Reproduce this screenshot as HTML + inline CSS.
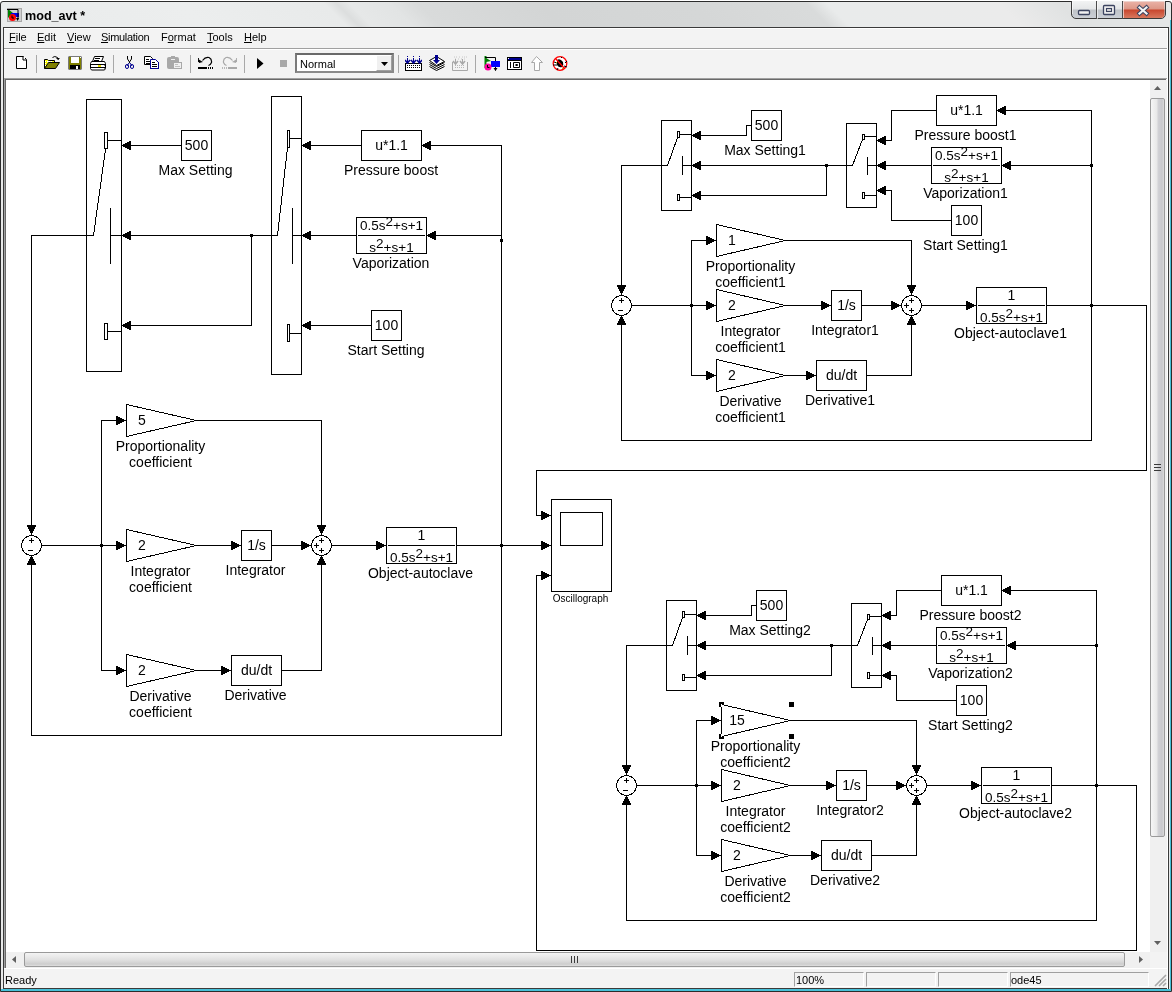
<!DOCTYPE html>
<html><head><meta charset="utf-8"><style>
*{margin:0;padding:0;box-sizing:border-box}
html,body{width:1172px;height:992px;overflow:hidden;background:#fff;font-family:"Liberation Sans",sans-serif}
.a{position:absolute;will-change:transform}
.mn{font-size:11px;color:#000;line-height:13px}
.mn u{text-decoration:underline}
.st{font-size:11px;color:#000;line-height:13px}
</style></head><body>
<div class="a" style="left:0;top:1px;width:1172px;height:991px;background:#e8e9e9;border-radius:3px 3px 0 0"></div>
<div class="a" style="left:1px;top:2px;width:1170px;height:26px;background:linear-gradient(45deg,#e9ebeb 0.0%,#eceeee 17.1%,#e8eaea 29.1%,#dcdede 30.1%,#e6e8e8 31.2%,#e2e4e4 34.6%,#d9dbdb 36.8%,#d3d5d5 47.0%,#d5d7d7 59.8%,#d9dbdb 69.4%,#e9ebeb 71.1%,#ebebeb 85.5%,#e0e2e2 90.6%,#e6e8e8 100.0%)"></div>
<div class="a" style="left:0;top:1px;width:1172px;height:991px;border:1px solid #2c2c2c;border-radius:3px 3px 0 0"></div>
<div class="a" style="left:1170px;top:20px;width:1px;height:970px;background:#48c0d8"></div>
<div class="a" style="left:1px;top:989px;width:1170px;height:2px;background:#48c0d8"></div>
<div class="a" style="left:3px;top:27px;width:1166px;height:962px;border:1px solid #3a3a3a;background:#f3f3f3"></div>
<div class="a" style="left:4px;top:28px;width:1164px;height:1px;background:#fff"></div>
<svg class="a" style="left:7px;top:8px" width="15" height="14"><rect x="0" y="0" width="15" height="14" fill="#a8a8a8"/><rect x="1" y="1" width="13" height="12" fill="#d0d0d0"/><path d="M1 1v9l5-5z" fill="#008000"/><rect x="4" y="5" width="8" height="4" fill="#0000f0"/><circle cx="5.5" cy="9.5" r="3.5" fill="#ff0000"/><path d="M5 7.5v2.5h2" fill="none" stroke="#000"/><path d="M0 1.5h11v10" fill="none" stroke="#000"/><path d="M9 10l1.5 3l1.5-3z" fill="#000"/></svg>
<div class="a" style="left:25px;top:8px;font-size:12.6px;font-weight:bold;color:#000;line-height:16px">mod_avt *</div>
<svg class="a" style="left:1071px;top:1px" width="95" height="19">
 <defs><linearGradient id="gb" x1="0" y1="0" x2="0" y2="1"><stop offset="0" stop-color="#f2f3f3"/><stop offset="0.47" stop-color="#e4e6e7"/><stop offset="0.5" stop-color="#bfc3c8"/><stop offset="1" stop-color="#ccd0d6"/></linearGradient>
 <linearGradient id="gr" x1="0" y1="0" x2="0" y2="1"><stop offset="0" stop-color="#eab2a6"/><stop offset="0.47" stop-color="#dc9686"/><stop offset="0.5" stop-color="#c8452c"/><stop offset="1" stop-color="#d8785e"/></linearGradient></defs>
 <path d="M0.5 0v13a4.5 4.5 0 0 0 4.5 4.5h85a4.5 4.5 0 0 0 4.5-4.5v-13" fill="url(#gb)" stroke="#3a3a3a"/>
 <path d="M51 0.5h42.5v12.5a4 4 0 0 1-4 4h-38.5z" fill="url(#gr)"/>
 <path d="M25.5 0v18M51.5 0v18" stroke="#4a4a4a"/>
 <path d="M1.5 1v12M26.5 1v17M52.5 1v16" stroke="#fff" stroke-opacity="0.6"/>
 <rect x="7.5" y="9.5" width="11" height="4" rx="1" fill="#f0f0f0" stroke="#3c4460" stroke-width="1.3"/>
 <rect x="32.5" y="4.5" width="11" height="9" rx="1" fill="#f0f0f0" stroke="#3c4460" stroke-width="1.3"/>
 <rect x="35.5" y="7.5" width="5" height="3" fill="#d8d8d8" stroke="#3c4460" stroke-width="1.1"/>
 <path d="M68.5 6.5l7 6M75.5 6.5l-7 6" stroke="#3c4460" stroke-width="4.2" stroke-linecap="square"/>
 <path d="M68.5 6.5l7 6M75.5 6.5l-7 6" stroke="#f4f4f4" stroke-width="2.2" stroke-linecap="square"/>
</svg>
<div class="a mn" style="left:9px;top:31px"><u>F</u>ile</div><div class="a mn" style="left:37px;top:31px"><u>E</u>dit</div><div class="a mn" style="left:67px;top:31px"><u>V</u>iew</div><div class="a mn" style="left:101px;top:31px"><span style="letter-spacing:-0.3px"><u>S</u>imulation</span></div><div class="a mn" style="left:161px;top:31px">F<u>o</u>rmat</div><div class="a mn" style="left:207px;top:31px"><u>T</u>ools</div><div class="a mn" style="left:244px;top:31px"><u>H</u>elp</div>
<div class="a" style="left:4px;top:48px;width:1164px;height:1px;background:#a0a0a0"></div>
<div class="a" style="left:4px;top:49px;width:1164px;height:1px;background:#fff"></div>
<div class="a" style="left:36px;top:55px;width:1px;height:18px;background:#a8a8a8"></div><div class="a" style="left:113px;top:55px;width:1px;height:18px;background:#a8a8a8"></div><div class="a" style="left:190px;top:55px;width:1px;height:18px;background:#a8a8a8"></div><div class="a" style="left:244px;top:55px;width:1px;height:18px;background:#a8a8a8"></div><div class="a" style="left:398px;top:55px;width:1px;height:18px;background:#a8a8a8"></div><div class="a" style="left:475px;top:55px;width:1px;height:18px;background:#a8a8a8"></div>
<svg class="a" style="left:15px;top:55px" width="14" height="15" viewBox="0 0 14 15" ><path d="M1.5 1.5h7l3 3v9h-10z" fill="#fff" stroke="#000"/><path d="M8 2v3h3" fill="none" stroke="#000"/><rect x="9" y="2" width="1" height="2" fill="#fff"/></svg><svg class="a" style="left:44px;top:55px" width="17" height="15" viewBox="0 0 17 15" ><path d="M0.5 4.5h3l1 1h6v2" fill="#ffff00" stroke="#000"/><path d="M0.5 4.5v9" stroke="#000"/><path d="M1 5h3v8h-3z" fill="#ffff00"/><path d="M1 6l1 1M3 6l1 1M1 8l1 1M3 8l1 1M1 10l1 1M5 6l1 1M7 6l1 1" stroke="#fff"/><path d="M0.5 13.5l4-6h11l-4 6z" fill="#808000" stroke="#000"/><path d="M8.5 2.5q2-2 5 0l1 2" fill="none" stroke="#000"/><path d="M12 3h4l-2 2z" fill="#000"/></svg><svg class="a" style="left:68px;top:56px" width="15" height="14" viewBox="0 0 15 14" ><rect x="0.5" y="0.5" width="13" height="13" fill="#000"/><rect x="1" y="1" width="12" height="12" fill="#808000"/><rect x="3" y="1" width="8" height="6" fill="#fff"/><rect x="2" y="9" width="10" height="4" fill="#000"/><rect x="8" y="10" width="2" height="3" fill="#fff"/><rect x="12" y="1" width="1" height="1" fill="#fff"/></svg><svg class="a" style="left:89px;top:55px" width="18" height="16" viewBox="0 0 18 16" ><path d="M5.5 1.5h9l-2 5h-9z" fill="#fff" stroke="#000"/><path d="M6 3.5h5M5 5.5h5" stroke="#000"/><path d="M2.5 6.5h13l1 2v5l-1 1.5h-13l-1-1.5v-5z" fill="#fff" stroke="#000"/><path d="M2 9.5h14M2 12.5h14" stroke="#000"/><rect x="9" y="10" width="3" height="2" fill="#e8e000"/><path d="M15 7l1 1M15 10l1 1M15 13l1 1" stroke="#808080"/></svg><svg class="a" style="left:124px;top:55px" width="12" height="15" viewBox="0 0 12 15" ><path d="M3.5 1v3l2 3M7.5 1v3l-2 3" fill="none" stroke="#000"/><path d="M5.5 7v1" stroke="#000"/><path d="M5 8l-2 3M6 8l2 3" stroke="#000090"/><rect x="1.5" y="9.5" width="3" height="4" rx="1.5" fill="none" stroke="#000090"/><rect x="6.5" y="9.5" width="3" height="4" rx="1.5" fill="none" stroke="#000090"/></svg><svg class="a" style="left:143px;top:55px" width="17" height="15" viewBox="0 0 17 15" ><path d="M1.5 1.5h6l2 2v6h-8z" fill="#fff" stroke="#000"/><path d="M3 4.5h3M3 6.5h4M3 8.5h4" stroke="#000"/><path d="M7.5 4.5h5l3 3v6h-8z" fill="#fff" stroke="#000090" stroke-width="1"/><path d="M7 13.5h9M15.5 7v7" stroke="#000090"/><path d="M9 7.5h3M9 9.5h5M9 11.5h5" stroke="#000"/></svg><svg class="a" style="left:167px;top:55px" width="15" height="15" viewBox="0 0 15 15" ><rect x="0" y="2" width="12" height="12" rx="2" fill="#a8a8a8"/><rect x="4" y="1" width="4" height="2" fill="#a8a8a8"/><path d="M4 4.5h4" stroke="#f0f0f0"/><rect x="6.5" y="7.5" width="8" height="6" fill="#f0f0f0" stroke="#a8a8a8"/><path d="M8 9.5h3M8 11.5h5" stroke="#c0c0c0"/></svg><svg class="a" style="left:198px;top:56px" width="16" height="14" viewBox="0 0 16 14" ><path d="M4.5 4.5q3-4 6.5-3q3 1.5 2.5 5q-1 2.5-3 3" fill="none" stroke="#000" stroke-width="1.2"/><path d="M0 2h1v4h4l-4 1z" fill="#000"/><path d="M0 3l5 3h-5z" fill="#000"/><rect x="0" y="11" width="9" height="2" fill="#000"/><rect x="10" y="11" width="1" height="2" fill="#000"/><rect x="12" y="11" width="1" height="2" fill="#000"/><rect x="14" y="11" width="1" height="2" fill="#000"/></svg><svg class="a" style="left:221px;top:56px" width="16" height="14" viewBox="0 0 16 14" ><path d="M11.5 4.5q-3-4-6.5-3q-3 1.5-2.5 5q1 2.5 3 3" fill="none" stroke="#a8a8a8" stroke-width="1.2"/><path d="M16 2h-1v4h-4l4 1z" fill="#a8a8a8"/><path d="M16 3l-5 3h5z" fill="#a8a8a8"/><rect x="7" y="11" width="9" height="2" fill="#a8a8a8"/><rect x="1" y="11" width="1" height="2" fill="#b8b8b8"/><rect x="3" y="11" width="1" height="2" fill="#b8b8b8"/><rect x="5" y="11" width="1" height="2" fill="#b8b8b8"/></svg><svg class="a" style="left:257px;top:58px" width="7" height="11" viewBox="0 0 7 11" ><path d="M0 0l6.5 5.5l-6.5 5.5z" fill="#000"/></svg><svg class="a" style="left:280px;top:60px" width="7" height="7" viewBox="0 0 7 7" ><rect width="7" height="7" fill="#a8a8a8"/></svg><svg class="a" style="left:405px;top:56px" width="17" height="15" viewBox="0 0 17 15" ><rect x="0.5" y="7.5" width="16" height="7" fill="#fff" stroke="#000"/><rect x="0" y="14" width="17" height="1" fill="#000"/><path d="M2 9.5h1M4 9.5h1M6 9.5h1M8 9.5h1M10 9.5h1M12 9.5h1M14 9.5h1M2 11.5h1M4 11.5h1M6 11.5h1M8 11.5h1M10 11.5h1M12 11.5h1M14 11.5h1" stroke="#000"/><path d="M2.5 0v1M8.5 0v1M14.5 0v1M2.5 2v5M8.5 2v5M14.5 2v5" stroke="#000090"/><path d="M0 4l2.5 3l2.5-3M6 4l2.5 3l2.5-3M12 4l2.5 3l2.5-3" fill="none" stroke="#000090" stroke-width="1.5"/></svg><svg class="a" style="left:429px;top:55px" width="16" height="16" viewBox="0 0 16 16" ><path d="M0.5 5.5l7-4l8 5l-8 4z" fill="#fff" stroke="#000"/><path d="M0.5 7.5l7 4l8-4M0.5 9.5l7 4l8-4M0.5 11.5l7 4l8-4" fill="none" stroke="#000"/><path d="M6 0h3v5h2l-3.5 4l-3.5-4h2z" fill="#000090"/></svg><svg class="a" style="left:452px;top:56px" width="16" height="15" viewBox="0 0 16 15" ><path d="M0.5 6v8.5h15v-8.5" fill="none" stroke="#a8a8a8"/><path d="M3 9.5h1M5 9.5h1M7 9.5h1M9 9.5h1M11 9.5h1M3 11.5h1M5 11.5h1M7 11.5h1M9 11.5h1M11 11.5h1" stroke="#b8b8b8"/><path d="M2 1h1M4 1h1M7 1h1M10 1h1M12 1h1M14 1h1M3 3h1M6 3h1M9 3h1M12 3h1" stroke="#c8c8c8"/><path d="M3.5 3v4M10.5 3v4" stroke="#a8a8a8"/><path d="M1 5l2.5 3l2.5-3M8 5l2.5 3l2.5-3" fill="none" stroke="#a8a8a8" stroke-width="1.5"/></svg><svg class="a" style="left:484px;top:55px" width="16" height="17" viewBox="0 0 16 17" ><path d="M1.5 1v12" stroke="#008000" stroke-width="2"/><path d="M2 3l5 3l-5 1z" fill="#008000"/><path d="M1 2.5h10.5v13" fill="none" stroke="#000"/><rect x="7" y="6" width="9" height="6" fill="#0000ff"/><circle cx="4" cy="12" r="3.5" fill="#ff00a0"/><path d="M3.5 10v2.5h2" stroke="#000" fill="none"/><path d="M9.5 13l2 3l2-3z" fill="#000"/></svg><svg class="a" style="left:507px;top:57px" width="15" height="13" viewBox="0 0 15 13" ><rect x="0" y="0" width="15" height="13" fill="#000"/><rect x="1" y="1" width="13" height="2" fill="#000090"/><rect x="1" y="1" width="1" height="1" fill="#fff"/><rect x="1" y="4" width="13" height="8" fill="#fff"/><rect x="3" y="5" width="1" height="6" fill="#000"/><path d="M6.5 5.5h6v5h-6zM8.5 7.5h2v1h-2" fill="none" stroke="#000"/></svg><svg class="a" style="left:530px;top:56px" width="14" height="15" viewBox="0 0 14 15" ><path d="M6.5 0.5l6 6h-3v8h-5v-8h-3z" fill="#fff" stroke="#a8a8a8"/></svg><svg class="a" style="left:552px;top:56px" width="16" height="15" viewBox="0 0 16 15" ><circle cx="8" cy="7.5" r="6.8" fill="#fff" stroke="#ff0000" stroke-width="1.3"/><path d="M5 4q3-2 6 2q1 3-1 5q-3 1-5-2z" fill="#000"/><path d="M2 6l3 1M1 9l4 0M13 7l2-2M12 10l3 1M6 12l-1 2M9 2l1-1" stroke="#000"/><path d="M3.5 2.5l9 10" stroke="#ff0000" stroke-width="1.3"/><rect x="4" y="6" width="1" height="1" fill="#c0c000"/><rect x="10" y="12" width="1" height="1" fill="#c0c000"/></svg>
<div class="a" style="left:295px;top:53px;width:99px;height:20px;border:2px solid;border-color:#6a6a6a #8a8a8a #8a8a8a #7a7a7a;background:#fff"></div>
<div class="a" style="left:376px;top:55px;width:16px;height:16px;background:#f0f0f0;border:1px solid;border-color:#fff #a0a0a0 #a0a0a0 #fff"></div>
<svg class="a" style="left:381px;top:62px" width="7" height="4"><path d="M0 0h7l-3.5 4z" fill="#000"/></svg>
<div class="a" style="left:300px;top:58px;font-size:11px;line-height:13px">Normal</div>
<div class="a" style="left:4px;top:78px;width:1163px;height:1px;background:#a0a0a0"></div>
<div class="a" style="left:5px;top:79px;width:1161px;height:1px;background:#696969"></div>
<div class="a" style="left:4px;top:78px;width:1px;height:890px;background:#a0a0a0"></div><div class="a" style="left:5px;top:79px;width:1px;height:889px;background:#696969"></div><div class="a" style="left:1167px;top:28px;width:1px;height:961px;background:#fff"></div>
<div class="a" style="left:6px;top:80px;width:1144px;height:872px;background:#fff"></div>
<div class="a" style="left:1150px;top:80px;width:17px;height:872px;background:#f0f0f0"></div>
<div class="a" style="left:1150px;top:98px;width:15px;height:739px;border:1px solid #9a9a9a;border-radius:2px;background:linear-gradient(90deg,#f6f6f6,#e8e8e8 45%,#d2d2d6 55%,#c8c8cc 85%,#dcdcdc)"></div>
<svg class="a" style="left:1154px;top:86px" width="7" height="4"><path d="M0 4h7l-3.5-4z" fill="#606060"/></svg>
<svg class="a" style="left:1154px;top:941px" width="7" height="4"><path d="M0 0h7l-3.5 4z" fill="#606060"/></svg>
<div class="a" style="left:6px;top:952px;width:1144px;height:16px;background:#f0f0f0"></div>
<div class="a" style="left:24px;top:952px;width:1101px;height:15px;border:1px solid #9a9a9a;border-radius:2px;background:linear-gradient(#f4f4f4,#e2e2e2 50%,#cdcdcd 85%,#dedede)"></div>
<div class="a" style="left:571px;top:956px;width:7px;height:7px;background:repeating-linear-gradient(90deg,#3a3a3a 0 1px,transparent 1px 3px)"></div><div class="a" style="left:1154px;top:464px;width:7px;height:7px;background:repeating-linear-gradient(180deg,#3a3a3a 0 1px,transparent 1px 3px)"></div>
<svg class="a" style="left:12px;top:956px" width="4" height="7"><path d="M4 0v7l-4-3.5z" fill="#606060"/></svg>
<svg class="a" style="left:1139px;top:956px" width="4" height="7"><path d="M0 0v7l4-3.5z" fill="#606060"/></svg>
<div class="a" style="left:4px;top:968px;width:1164px;height:1px;background:#fff"></div>
<div class="a st" style="left:5px;top:974px">Ready</div>
<div class="a" style="left:794px;top:972px;width:70px;height:15px;border:1px solid;border-color:#a0a0a0 #fff #fff #a0a0a0"></div>
<div class="a" style="left:866px;top:972px;width:70px;height:15px;border:1px solid;border-color:#a0a0a0 #fff #fff #a0a0a0"></div>
<div class="a" style="left:938px;top:972px;width:70px;height:15px;border:1px solid;border-color:#a0a0a0 #fff #fff #a0a0a0"></div>
<div class="a" style="left:1010px;top:972px;width:139px;height:15px;border:1px solid;border-color:#a0a0a0 #fff #fff #a0a0a0"></div>
<div class="a st" style="left:796px;top:974px">100%</div>
<div class="a st" style="left:1011px;top:974px">ode45</div>
<svg class="a" style="left:1154px;top:974px" width="13" height="13"><path d="M12 1L1 12M12 5L5 12M12 9L9 12" stroke="#a8a8a8" stroke-width="1.6"/></svg>
<svg width="1172" height="992" style="position:absolute;left:0;top:0"><defs><clipPath id="cv"><rect x="6" y="80" width="1144" height="872"/></clipPath></defs><g clip-path="url(#cv)" font-family="Liberation Sans, sans-serif" fill="#000"><path d="M86 99h36v1h-36zM86 371h36v1h-36zM86 99h1v273h-1zM121 99h1v273h-1zM104 132h4v1h-4zM104 148h4v1h-4zM104 132h1v17h-1zM107 132h1v17h-1zM108 140h14v1h-14zM104 323h4v1h-4zM104 339h4v1h-4zM104 323h1v17h-1zM107 323h1v17h-1zM108 331h14v1h-14zM110 208h1v56h-1zM111 235h11v1h-11zM271 96h31v1h-31zM271 374h31v1h-31zM271 96h1v279h-1zM301 96h1v279h-1zM287 130h3v1h-3zM287 147h3v1h-3zM287 130h1v18h-1zM289 130h1v18h-1zM290 138h12v1h-12zM287 324h3v1h-3zM287 341h3v1h-3zM287 324h1v18h-1zM289 324h1v18h-1zM290 333h12v1h-12zM292 208h1v56h-1zM293 235h9v1h-9zM181 130h31v1h-31zM181 160h31v1h-31zM181 130h1v31h-1zM211 130h1v31h-1zM122 145h59v1h-59zM123 144h2v3h-2zM125 143h2v5h-2zM127 142h2v7h-2zM129 141h2v9h-2zM361 130h61v1h-61zM361 160h61v1h-61zM361 130h1v31h-1zM421 130h1v31h-1zM302 145h59v1h-59zM303 144h2v3h-2zM305 143h2v5h-2zM307 142h2v7h-2zM309 141h2v9h-2zM501 145h1v591h-1zM422 145h80v1h-80zM423 144h2v3h-2zM425 143h2v5h-2zM427 142h2v7h-2zM429 141h2v9h-2zM356 217h71v1h-71zM356 253h71v1h-71zM356 217h1v37h-1zM426 217h1v37h-1zM358 235h67v1h-67zM427 235h75v1h-75zM428 234h2v3h-2zM430 233h2v5h-2zM432 232h2v7h-2zM434 231h2v9h-2zM500 239h3v3h-3zM302 235h54v1h-54zM303 234h2v3h-2zM305 233h2v5h-2zM307 232h2v7h-2zM309 231h2v9h-2zM371 310h31v1h-31zM371 340h31v1h-31zM371 310h1v31h-1zM401 310h1v31h-1zM302 325h69v1h-69zM303 324h2v3h-2zM305 323h2v5h-2zM307 322h2v7h-2zM309 321h2v9h-2zM122 235h156v1h-156zM250 234h3v3h-3zM123 234h2v3h-2zM125 233h2v5h-2zM127 232h2v7h-2zM129 231h2v9h-2zM251 235h1v91h-1zM122 325h130v1h-130zM123 324h2v3h-2zM125 323h2v5h-2zM127 322h2v7h-2zM129 321h2v9h-2zM31 235h63v1h-63zM31 235h1v300h-1zM27 525h9v2h-9zM28 527h7v2h-7zM29 529h5v2h-5zM30 531h3v2h-3zM29 540h5v1h-5zM31 538h1v5h-1zM28 550h5v1h-5zM42 545h84v1h-84zM116 541h2v9h-2zM118 542h2v7h-2zM120 543h2v5h-2zM122 544h2v3h-2zM100 544h3v3h-3zM101 420h1v251h-1zM101 420h25v1h-25zM116 416h2v9h-2zM118 417h2v7h-2zM120 418h2v5h-2zM122 419h2v3h-2zM101 670h25v1h-25zM116 666h2v9h-2zM118 667h2v7h-2zM120 668h2v5h-2zM122 669h2v3h-2zM126 404h1v33h-1zM126 529h1v33h-1zM126 654h1v33h-1zM195 420h127v1h-127zM321 420h1v115h-1zM317 525h9v2h-9zM318 527h7v2h-7zM319 529h5v2h-5zM320 531h3v2h-3zM195 545h46v1h-46zM231 541h2v9h-2zM233 542h2v7h-2zM235 543h2v5h-2zM237 544h2v3h-2zM241 530h31v1h-31zM241 560h31v1h-31zM241 530h1v31h-1zM271 530h1v31h-1zM272 545h39v1h-39zM301 541h2v9h-2zM303 542h2v7h-2zM305 543h2v5h-2zM307 544h2v3h-2zM195 670h36v1h-36zM221 666h2v9h-2zM223 667h2v7h-2zM225 668h2v5h-2zM227 669h2v3h-2zM231 655h51v1h-51zM231 685h51v1h-51zM231 655h1v31h-1zM281 655h1v31h-1zM282 670h40v1h-40zM321 556h1v115h-1zM320 557h3v2h-3zM319 559h5v2h-5zM318 561h7v2h-7zM317 563h9v2h-9zM319 540h5v1h-5zM321 538h1v5h-1zM314 545h5v1h-5zM316 543h1v5h-1zM319 550h5v1h-5zM321 548h1v5h-1zM332 545h54v1h-54zM376 541h2v9h-2zM378 542h2v7h-2zM380 543h2v5h-2zM382 544h2v3h-2zM386 527h71v1h-71zM386 563h71v1h-71zM386 527h1v37h-1zM456 527h1v37h-1zM388 545h67v1h-67zM457 545h94v1h-94zM500 544h3v3h-3zM541 541h2v9h-2zM543 542h2v7h-2zM545 543h2v5h-2zM547 544h2v3h-2zM31 735h471v1h-471zM31 556h1v180h-1zM30 557h3v2h-3zM29 559h5v2h-5zM28 561h7v2h-7zM27 563h9v2h-9zM551 499h61v1h-61zM551 591h61v1h-61zM551 499h1v93h-1zM611 499h1v93h-1zM560 512h43v1h-43zM560 545h43v1h-43zM560 512h1v34h-1zM602 512h1v34h-1zM661 120h31v1h-31zM661 210h31v1h-31zM661 120h1v91h-1zM691 120h1v91h-1zM677 131h3v1h-3zM677 137h3v1h-3zM677 131h1v7h-1zM679 131h1v7h-1zM680 134h12v1h-12zM677 194h3v1h-3zM677 200h3v1h-3zM677 194h1v7h-1zM679 194h1v7h-1zM680 197h12v1h-12zM682 156h1v19h-1zM683 165h9v1h-9zM846 123h31v1h-31zM846 207h31v1h-31zM846 123h1v85h-1zM876 123h1v85h-1zM862 134h3v1h-3zM862 139h3v1h-3zM862 134h1v6h-1zM864 134h1v6h-1zM865 136h12v1h-12zM862 192h3v1h-3zM862 198h3v1h-3zM862 192h1v7h-1zM864 192h1v7h-1zM865 195h12v1h-12zM867 157h1v18h-1zM868 165h9v1h-9zM751 110h31v1h-31zM751 140h31v1h-31zM751 110h1v31h-1zM781 110h1v31h-1zM746 125h5v1h-5zM746 125h1v11h-1zM692 135h55v1h-55zM693 134h2v3h-2zM695 133h2v5h-2zM697 132h2v7h-2zM699 131h2v9h-2zM692 165h161v1h-161zM825 164h3v3h-3zM693 164h2v3h-2zM695 163h2v5h-2zM697 162h2v7h-2zM699 161h2v9h-2zM826 165h1v31h-1zM692 195h135v1h-135zM693 194h2v3h-2zM695 193h2v5h-2zM697 192h2v7h-2zM699 191h2v9h-2zM621 165h47v1h-47zM621 165h1v130h-1zM617 285h9v2h-9zM618 287h7v2h-7zM619 289h5v2h-5zM620 291h3v2h-3zM936 95h61v1h-61zM936 125h61v1h-61zM936 95h1v31h-1zM996 95h1v31h-1zM891 110h45v1h-45zM891 110h1v31h-1zM877 140h15v1h-15zM878 139h2v3h-2zM880 138h2v5h-2zM882 137h2v7h-2zM884 136h2v9h-2zM931 147h71v1h-71zM931 183h71v1h-71zM931 147h1v37h-1zM1001 147h1v37h-1zM933 165h67v1h-67zM877 165h54v1h-54zM878 164h2v3h-2zM880 163h2v5h-2zM882 162h2v7h-2zM884 161h2v9h-2zM951 205h31v1h-31zM951 235h31v1h-31zM951 205h1v31h-1zM981 205h1v31h-1zM891 220h60v1h-60zM891 190h1v31h-1zM877 190h15v1h-15zM878 189h2v3h-2zM880 188h2v5h-2zM882 187h2v7h-2zM884 186h2v9h-2zM1091 110h1v331h-1zM997 110h95v1h-95zM998 109h2v3h-2zM1000 108h2v5h-2zM1002 107h2v7h-2zM1004 106h2v9h-2zM1002 165h90v1h-90zM1003 164h2v3h-2zM1005 163h2v5h-2zM1007 162h2v7h-2zM1009 161h2v9h-2zM1090 164h3v3h-3zM619 300h5v1h-5zM621 298h1v5h-1zM618 310h5v1h-5zM632 305h84v1h-84zM706 301h2v9h-2zM708 302h2v7h-2zM710 303h2v5h-2zM712 304h2v3h-2zM690 304h3v3h-3zM691 240h1v136h-1zM691 240h25v1h-25zM706 236h2v9h-2zM708 237h2v7h-2zM710 238h2v5h-2zM712 239h2v3h-2zM691 375h25v1h-25zM706 371h2v9h-2zM708 372h2v7h-2zM710 373h2v5h-2zM712 374h2v3h-2zM716 224h1v33h-1zM716 289h1v33h-1zM716 359h1v33h-1zM784 240h128v1h-128zM911 240h1v55h-1zM907 285h9v2h-9zM908 287h7v2h-7zM909 289h5v2h-5zM910 291h3v2h-3zM784 305h47v1h-47zM821 301h2v9h-2zM823 302h2v7h-2zM825 303h2v5h-2zM827 304h2v3h-2zM831 290h31v1h-31zM831 320h31v1h-31zM831 290h1v31h-1zM861 290h1v31h-1zM862 305h39v1h-39zM891 301h2v9h-2zM893 302h2v7h-2zM895 303h2v5h-2zM897 304h2v3h-2zM784 375h32v1h-32zM806 371h2v9h-2zM808 372h2v7h-2zM810 373h2v5h-2zM812 374h2v3h-2zM816 360h51v1h-51zM816 390h51v1h-51zM816 360h1v31h-1zM866 360h1v31h-1zM867 375h45v1h-45zM911 316h1v60h-1zM910 317h3v2h-3zM909 319h5v2h-5zM908 321h7v2h-7zM907 323h9v2h-9zM909 300h5v1h-5zM911 298h1v5h-1zM904 305h5v1h-5zM906 303h1v5h-1zM909 310h5v1h-5zM911 308h1v5h-1zM922 305h54v1h-54zM966 301h2v9h-2zM968 302h2v7h-2zM970 303h2v5h-2zM972 304h2v3h-2zM976 287h71v1h-71zM976 323h71v1h-71zM976 287h1v37h-1zM1046 287h1v37h-1zM978 305h67v1h-67zM1090 304h3v3h-3zM621 440h471v1h-471zM621 316h1v125h-1zM620 317h3v2h-3zM619 319h5v2h-5zM618 321h7v2h-7zM617 323h9v2h-9zM1047 305h100v1h-100zM1146 305h1v166h-1zM536 470h611v1h-611zM536 470h1v46h-1zM536 515h15v1h-15zM541 511h2v9h-2zM543 512h2v7h-2zM545 513h2v5h-2zM547 514h2v3h-2zM666 600h31v1h-31zM666 690h31v1h-31zM666 600h1v91h-1zM696 600h1v91h-1zM682 611h3v1h-3zM682 617h3v1h-3zM682 611h1v7h-1zM684 611h1v7h-1zM685 614h12v1h-12zM682 674h3v1h-3zM682 680h3v1h-3zM682 674h1v7h-1zM684 674h1v7h-1zM685 677h12v1h-12zM687 636h1v19h-1zM688 645h9v1h-9zM851 603h31v1h-31zM851 687h31v1h-31zM851 603h1v85h-1zM881 603h1v85h-1zM867 614h3v1h-3zM867 619h3v1h-3zM867 614h1v6h-1zM869 614h1v6h-1zM870 616h12v1h-12zM867 672h3v1h-3zM867 678h3v1h-3zM867 672h1v7h-1zM869 672h1v7h-1zM870 675h12v1h-12zM872 637h1v18h-1zM873 645h9v1h-9zM756 590h31v1h-31zM756 620h31v1h-31zM756 590h1v31h-1zM786 590h1v31h-1zM751 605h5v1h-5zM751 605h1v11h-1zM697 615h55v1h-55zM698 614h2v3h-2zM700 613h2v5h-2zM702 612h2v7h-2zM704 611h2v9h-2zM697 645h161v1h-161zM830 644h3v3h-3zM698 644h2v3h-2zM700 643h2v5h-2zM702 642h2v7h-2zM704 641h2v9h-2zM831 645h1v31h-1zM697 675h135v1h-135zM698 674h2v3h-2zM700 673h2v5h-2zM702 672h2v7h-2zM704 671h2v9h-2zM626 645h47v1h-47zM626 645h1v130h-1zM622 765h9v2h-9zM623 767h7v2h-7zM624 769h5v2h-5zM625 771h3v2h-3zM941 575h61v1h-61zM941 605h61v1h-61zM941 575h1v31h-1zM1001 575h1v31h-1zM896 590h45v1h-45zM896 590h1v26h-1zM882 615h15v1h-15zM883 614h2v3h-2zM885 613h2v5h-2zM887 612h2v7h-2zM889 611h2v9h-2zM936 627h71v1h-71zM936 663h71v1h-71zM936 627h1v37h-1zM1006 627h1v37h-1zM938 645h67v1h-67zM882 645h54v1h-54zM883 644h2v3h-2zM885 643h2v5h-2zM887 642h2v7h-2zM889 641h2v9h-2zM956 685h31v1h-31zM956 715h31v1h-31zM956 685h1v31h-1zM986 685h1v31h-1zM896 700h60v1h-60zM896 675h1v26h-1zM882 675h15v1h-15zM883 674h2v3h-2zM885 673h2v5h-2zM887 672h2v7h-2zM889 671h2v9h-2zM1096 590h1v331h-1zM1002 590h95v1h-95zM1003 589h2v3h-2zM1005 588h2v5h-2zM1007 587h2v7h-2zM1009 586h2v9h-2zM1007 645h90v1h-90zM1008 644h2v3h-2zM1010 643h2v5h-2zM1012 642h2v7h-2zM1014 641h2v9h-2zM1095 644h3v3h-3zM624 780h5v1h-5zM626 778h1v5h-1zM623 790h5v1h-5zM637 785h84v1h-84zM711 781h2v9h-2zM713 782h2v7h-2zM715 783h2v5h-2zM717 784h2v3h-2zM695 784h3v3h-3zM696 720h1v136h-1zM696 720h25v1h-25zM711 716h2v9h-2zM713 717h2v7h-2zM715 718h2v5h-2zM717 719h2v3h-2zM696 855h25v1h-25zM711 851h2v9h-2zM713 852h2v7h-2zM715 853h2v5h-2zM717 854h2v3h-2zM721 704h1v33h-1zM721 769h1v33h-1zM721 839h1v33h-1zM789 720h128v1h-128zM916 720h1v55h-1zM912 765h9v2h-9zM913 767h7v2h-7zM914 769h5v2h-5zM915 771h3v2h-3zM789 785h47v1h-47zM826 781h2v9h-2zM828 782h2v7h-2zM830 783h2v5h-2zM832 784h2v3h-2zM836 770h31v1h-31zM836 800h31v1h-31zM836 770h1v31h-1zM866 770h1v31h-1zM867 785h39v1h-39zM896 781h2v9h-2zM898 782h2v7h-2zM900 783h2v5h-2zM902 784h2v3h-2zM789 855h32v1h-32zM811 851h2v9h-2zM813 852h2v7h-2zM815 853h2v5h-2zM817 854h2v3h-2zM821 840h51v1h-51zM821 870h51v1h-51zM821 840h1v31h-1zM871 840h1v31h-1zM872 855h45v1h-45zM916 796h1v60h-1zM915 797h3v2h-3zM914 799h5v2h-5zM913 801h7v2h-7zM912 803h9v2h-9zM914 780h5v1h-5zM916 778h1v5h-1zM909 785h5v1h-5zM911 783h1v5h-1zM914 790h5v1h-5zM916 788h1v5h-1zM927 785h54v1h-54zM971 781h2v9h-2zM973 782h2v7h-2zM975 783h2v5h-2zM977 784h2v3h-2zM981 767h71v1h-71zM981 803h71v1h-71zM981 767h1v37h-1zM1051 767h1v37h-1zM983 785h67v1h-67zM1095 784h3v3h-3zM626 920h471v1h-471zM626 796h1v125h-1zM625 797h3v2h-3zM624 799h5v2h-5zM623 801h7v2h-7zM622 803h9v2h-9zM1052 785h85v1h-85zM1136 785h1v166h-1zM536 950h601v1h-601zM536 575h1v376h-1zM536 575h15v1h-15zM541 571h2v9h-2zM543 572h2v7h-2zM545 573h2v5h-2zM547 574h2v3h-2zM719 702h5v2h-5zM719 704h2v3h-2zM719 737h5v2h-5zM719 734h2v3h-2zM789 702h5v5h-5zM789 734h5v5h-5z" fill="#000" shape-rendering="crispEdges"/><g style="will-change:transform"><line x1="93.5" y1="235.5" x2="105.5" y2="149.5" stroke="#000" stroke-width="1" shape-rendering="crispEdges"/><line x1="277.5" y1="235.5" x2="287.5" y2="147.5" stroke="#000" stroke-width="1" shape-rendering="crispEdges"/><text x="196.5" y="150" font-size="14" text-anchor="middle" >500</text><text x="195.5" y="175" font-size="14" text-anchor="middle" >Max Setting</text><text x="391.5" y="150" font-size="14" text-anchor="middle" >u*1.1</text><text x="391" y="175" font-size="14" text-anchor="middle" >Pressure boost</text><text x="391.5" y="230" font-size="14" text-anchor="middle" ><tspan font-size="13.5">0.5s<tspan dy="-4">2</tspan><tspan dy="4">+s+1</tspan></tspan></text><text x="391.5" y="252" font-size="14" text-anchor="middle" ><tspan font-size="13.5">s<tspan dy="-4">2</tspan><tspan dy="4">+s+1</tspan></tspan></text><text x="391" y="268" font-size="14" text-anchor="middle" >Vaporization</text><text x="386.5" y="330" font-size="14" text-anchor="middle" >100</text><text x="386" y="355" font-size="14" text-anchor="middle" >Start Setting</text><circle cx="31.5" cy="545.5" r="10" fill="none" stroke="#000" stroke-width="1" shape-rendering="crispEdges"/><line x1="126.5" y1="404.5" x2="196.5" y2="420.5" stroke="#000" stroke-width="1" shape-rendering="crispEdges"/><line x1="126.5" y1="436.5" x2="196.5" y2="420.5" stroke="#000" stroke-width="1" shape-rendering="crispEdges"/><text x="142" y="425" font-size="14" text-anchor="middle" >5</text><text x="160.5" y="451" font-size="14" text-anchor="middle" >Proportionality</text><text x="160.5" y="467" font-size="14" text-anchor="middle" >coefficient</text><line x1="126.5" y1="529.5" x2="196.5" y2="545.5" stroke="#000" stroke-width="1" shape-rendering="crispEdges"/><line x1="126.5" y1="561.5" x2="196.5" y2="545.5" stroke="#000" stroke-width="1" shape-rendering="crispEdges"/><text x="142" y="550" font-size="14" text-anchor="middle" >2</text><text x="160.5" y="576" font-size="14" text-anchor="middle" >Integrator</text><text x="160.5" y="592" font-size="14" text-anchor="middle" >coefficient</text><line x1="126.5" y1="654.5" x2="196.5" y2="670.5" stroke="#000" stroke-width="1" shape-rendering="crispEdges"/><line x1="126.5" y1="686.5" x2="196.5" y2="670.5" stroke="#000" stroke-width="1" shape-rendering="crispEdges"/><text x="142" y="675" font-size="14" text-anchor="middle" >2</text><text x="160.5" y="701" font-size="14" text-anchor="middle" >Derivative</text><text x="160.5" y="717" font-size="14" text-anchor="middle" >coefficient</text><text x="256.5" y="550" font-size="14" text-anchor="middle" >1/s</text><text x="255.5" y="575" font-size="14" text-anchor="middle" >Integrator</text><text x="256.5" y="675" font-size="14" text-anchor="middle" >du/dt</text><text x="255.5" y="700" font-size="14" text-anchor="middle" >Derivative</text><circle cx="321.5" cy="545.5" r="10" fill="none" stroke="#000" stroke-width="1" shape-rendering="crispEdges"/><text x="421.5" y="540" font-size="14" text-anchor="middle" >1</text><text x="421.5" y="562" font-size="14" text-anchor="middle" ><tspan font-size="13.5">0.5s<tspan dy="-4">2</tspan><tspan dy="4">+s+1</tspan></tspan></text><text x="420.5" y="578" font-size="14" text-anchor="middle" >Object-autoclave</text><text x="580.5" y="602" font-size="10" text-anchor="middle" >Oscillograph</text><line x1="667.5" y1="165.5" x2="677.5" y2="137.5" stroke="#000" stroke-width="1" shape-rendering="crispEdges"/><line x1="852.5" y1="165.5" x2="862.5" y2="139.5" stroke="#000" stroke-width="1" shape-rendering="crispEdges"/><text x="766.5" y="130" font-size="14" text-anchor="middle" >500</text><text x="765" y="155" font-size="14" text-anchor="middle" >Max Setting1</text><text x="966.5" y="115" font-size="14" text-anchor="middle" >u*1.1</text><text x="965.5" y="140" font-size="14" text-anchor="middle" >Pressure boost1</text><text x="966.5" y="160" font-size="14" text-anchor="middle" ><tspan font-size="13.5">0.5s<tspan dy="-4">2</tspan><tspan dy="4">+s+1</tspan></tspan></text><text x="966.5" y="182" font-size="14" text-anchor="middle" ><tspan font-size="13.5">s<tspan dy="-4">2</tspan><tspan dy="4">+s+1</tspan></tspan></text><text x="965.5" y="198" font-size="14" text-anchor="middle" >Vaporization1</text><text x="966.5" y="225" font-size="14" text-anchor="middle" >100</text><text x="965.5" y="250" font-size="14" text-anchor="middle" >Start Setting1</text><circle cx="621.5" cy="305.5" r="10" fill="none" stroke="#000" stroke-width="1" shape-rendering="crispEdges"/><line x1="716.5" y1="224.5" x2="785.5" y2="240.5" stroke="#000" stroke-width="1" shape-rendering="crispEdges"/><line x1="716.5" y1="256.5" x2="785.5" y2="240.5" stroke="#000" stroke-width="1" shape-rendering="crispEdges"/><text x="732" y="245" font-size="14" text-anchor="middle" >1</text><text x="750.5" y="271" font-size="14" text-anchor="middle" >Proportionality</text><text x="750.5" y="287" font-size="14" text-anchor="middle" >coefficient1</text><line x1="716.5" y1="289.5" x2="785.5" y2="305.5" stroke="#000" stroke-width="1" shape-rendering="crispEdges"/><line x1="716.5" y1="321.5" x2="785.5" y2="305.5" stroke="#000" stroke-width="1" shape-rendering="crispEdges"/><text x="732" y="310" font-size="14" text-anchor="middle" >2</text><text x="750.5" y="336" font-size="14" text-anchor="middle" >Integrator</text><text x="750.5" y="352" font-size="14" text-anchor="middle" >coefficient1</text><line x1="716.5" y1="359.5" x2="785.5" y2="375.5" stroke="#000" stroke-width="1" shape-rendering="crispEdges"/><line x1="716.5" y1="391.5" x2="785.5" y2="375.5" stroke="#000" stroke-width="1" shape-rendering="crispEdges"/><text x="732" y="380" font-size="14" text-anchor="middle" >2</text><text x="750.5" y="406" font-size="14" text-anchor="middle" >Derivative</text><text x="750.5" y="422" font-size="14" text-anchor="middle" >coefficient1</text><text x="846.5" y="310" font-size="14" text-anchor="middle" >1/s</text><text x="845" y="335" font-size="14" text-anchor="middle" >Integrator1</text><text x="841.5" y="380" font-size="14" text-anchor="middle" >du/dt</text><text x="840" y="405" font-size="14" text-anchor="middle" >Derivative1</text><circle cx="911.5" cy="305.5" r="10" fill="none" stroke="#000" stroke-width="1" shape-rendering="crispEdges"/><text x="1011.5" y="300" font-size="14" text-anchor="middle" >1</text><text x="1011.5" y="322" font-size="14" text-anchor="middle" ><tspan font-size="13.5">0.5s<tspan dy="-4">2</tspan><tspan dy="4">+s+1</tspan></tspan></text><text x="1010.5" y="338" font-size="14" text-anchor="middle" >Object-autoclave1</text><line x1="672.5" y1="645.5" x2="682.5" y2="617.5" stroke="#000" stroke-width="1" shape-rendering="crispEdges"/><line x1="857.5" y1="645.5" x2="867.5" y2="619.5" stroke="#000" stroke-width="1" shape-rendering="crispEdges"/><text x="771.5" y="610" font-size="14" text-anchor="middle" >500</text><text x="770" y="635" font-size="14" text-anchor="middle" >Max Setting2</text><text x="971.5" y="595" font-size="14" text-anchor="middle" >u*1.1</text><text x="970.5" y="620" font-size="14" text-anchor="middle" >Pressure boost2</text><text x="971.5" y="640" font-size="14" text-anchor="middle" ><tspan font-size="13.5">0.5s<tspan dy="-4">2</tspan><tspan dy="4">+s+1</tspan></tspan></text><text x="971.5" y="662" font-size="14" text-anchor="middle" ><tspan font-size="13.5">s<tspan dy="-4">2</tspan><tspan dy="4">+s+1</tspan></tspan></text><text x="970.5" y="678" font-size="14" text-anchor="middle" >Vaporization2</text><text x="971.5" y="705" font-size="14" text-anchor="middle" >100</text><text x="970.5" y="730" font-size="14" text-anchor="middle" >Start Setting2</text><circle cx="626.5" cy="785.5" r="10" fill="none" stroke="#000" stroke-width="1" shape-rendering="crispEdges"/><line x1="721.5" y1="704.5" x2="790.5" y2="720.5" stroke="#000" stroke-width="1" shape-rendering="crispEdges"/><line x1="721.5" y1="736.5" x2="790.5" y2="720.5" stroke="#000" stroke-width="1" shape-rendering="crispEdges"/><text x="737" y="725" font-size="14" text-anchor="middle" >15</text><text x="755.5" y="751" font-size="14" text-anchor="middle" >Proportionality</text><text x="755.5" y="767" font-size="14" text-anchor="middle" >coefficient2</text><line x1="721.5" y1="769.5" x2="790.5" y2="785.5" stroke="#000" stroke-width="1" shape-rendering="crispEdges"/><line x1="721.5" y1="801.5" x2="790.5" y2="785.5" stroke="#000" stroke-width="1" shape-rendering="crispEdges"/><text x="737" y="790" font-size="14" text-anchor="middle" >2</text><text x="755.5" y="816" font-size="14" text-anchor="middle" >Integrator</text><text x="755.5" y="832" font-size="14" text-anchor="middle" >coefficient2</text><line x1="721.5" y1="839.5" x2="790.5" y2="855.5" stroke="#000" stroke-width="1" shape-rendering="crispEdges"/><line x1="721.5" y1="871.5" x2="790.5" y2="855.5" stroke="#000" stroke-width="1" shape-rendering="crispEdges"/><text x="737" y="860" font-size="14" text-anchor="middle" >2</text><text x="755.5" y="886" font-size="14" text-anchor="middle" >Derivative</text><text x="755.5" y="902" font-size="14" text-anchor="middle" >coefficient2</text><text x="851.5" y="790" font-size="14" text-anchor="middle" >1/s</text><text x="850" y="815" font-size="14" text-anchor="middle" >Integrator2</text><text x="846.5" y="860" font-size="14" text-anchor="middle" >du/dt</text><text x="845" y="885" font-size="14" text-anchor="middle" >Derivative2</text><circle cx="916.5" cy="785.5" r="10" fill="none" stroke="#000" stroke-width="1" shape-rendering="crispEdges"/><text x="1016.5" y="780" font-size="14" text-anchor="middle" >1</text><text x="1016.5" y="802" font-size="14" text-anchor="middle" ><tspan font-size="13.5">0.5s<tspan dy="-4">2</tspan><tspan dy="4">+s+1</tspan></tspan></text><text x="1015.5" y="818" font-size="14" text-anchor="middle" >Object-autoclave2</text><path d="M721 704h1v3h-1zM721 734h1v3h-1z" fill="#fff" shape-rendering="crispEdges"/></g></g></svg>
</body></html>
